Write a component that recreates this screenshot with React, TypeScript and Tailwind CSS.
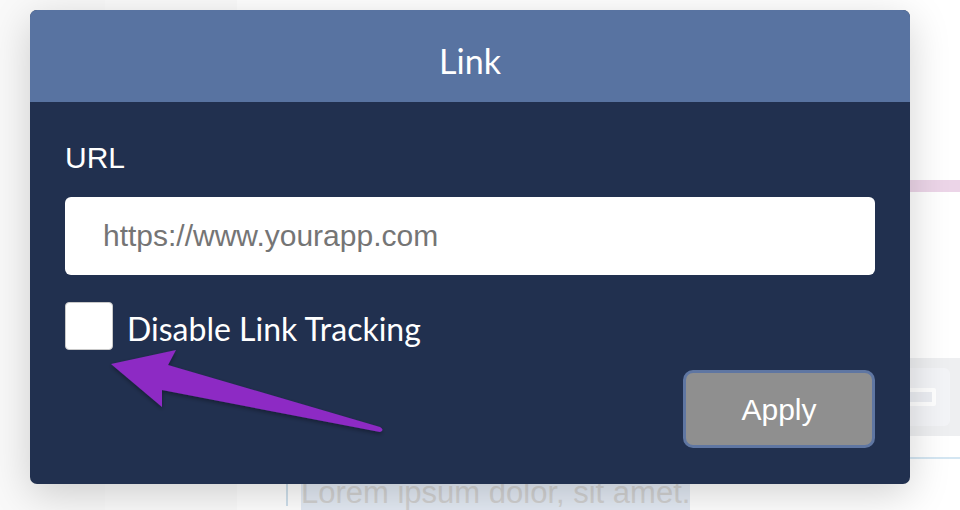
import React from "react";

export default function App() {
  return (
    <div className="relative w-[960px] h-[510px] overflow-hidden bg-white">
      {/* Background page */}
      <div className="flex w-full h-full">
        <div className="w-[105px] h-full bg-[#f9f9f9]" />
        <div className="w-[132px] h-full bg-[#fbfbfb]" />
        <div className="flex-1 flex flex-col">
          <div className="h-[183px]" />
          <div className="h-[12px] bg-[#ecd5e8]" />
          <div className="h-[169px]" />
          <div className="h-[79px] bg-[#eeeff1] p-[10px]">
            <div className="h-full rounded-md bg-[#f3f4f7] flex items-center justify-end pr-[14px]">
              <div className="w-[34px] h-[18px] border-[4px] border-white bg-[#eceef3] rounded-[2px]" />
            </div>
          </div>
          <div className="h-[22px]" />
          <div className="h-[2px] bg-[#d4e6f2]" />
          <div className="h-[17px]" />
          <div className="flex pl-[49px]">
            <div className="w-[2px] h-[30px] bg-[#cfe0ec]" />
            <div className="ml-[13px] bg-[#e3eaf4] text-[#d2d2d2] text-[31px] leading-[34px] font-['Liberation_Sans',sans-serif]">
              Lorem ipsum dolor, sit amet.
            </div>
          </div>
        </div>
      </div>

      {/* Modal */}
      <div className="absolute left-[30px] top-[10px] w-[880px] h-[474px] rounded-[7px] overflow-hidden bg-[#21304f] shadow-[0_10px_40px_rgba(0,0,0,0.18)] flex flex-col">
        <div className="h-[92px] bg-[#5873a1] flex items-center justify-center">
          <span className="text-white text-[34px] font-['Lato',sans-serif] leading-none pt-[10px]">Link</span>
        </div>
        <div className="flex-1 flex flex-col px-[35px] pt-[38px]">
          <div className="text-white text-[30px] leading-[36px] font-['Liberation_Sans',sans-serif]">URL</div>
          <input
            className="mt-[21px] h-[78px] w-full rounded-[6px] bg-white pl-[38px] text-[30px] font-['Liberation_Sans',sans-serif] text-[#333] placeholder:text-[#757575] outline-none"
            placeholder="https://www.yourapp.com"
          />
          <div className="mt-[27px] flex items-center">
            <div className="w-[48px] h-[48px] rounded-[4px] bg-white border border-[#c9c9c9]" />
            <span className="ml-[14px] text-white text-[32px] leading-none font-['Lato',sans-serif] pt-[6px]">Disable Link Tracking</span>
          </div>
          <div className="mt-[20px] flex justify-end">
            <button className="w-[192px] h-[78px] rounded-[10px] bg-[#8f8f8f] border-[3px] border-[#5f76a2] text-white text-[30px] font-['Liberation_Sans',sans-serif]">
              Apply
            </button>
          </div>
        </div>
      </div>

      {/* Annotation arrow */}
      <svg className="absolute inset-0 pointer-events-none" width="960" height="510" viewBox="0 0 960 510">
        <defs>
          <filter id="sh" x="-10%" y="-10%" width="120%" height="130%">
            <feDropShadow dx="0" dy="2" stdDeviation="2" floodColor="#000" floodOpacity="0.35" />
          </filter>
        </defs>
        <path
          d="M111,364 L176,350 L168,365 L380,427 Q385,430 380,432 L162,390 L162,407 Z"
          fill="#8d2bc4"
          filter="url(#sh)"
        />
      </svg>
    </div>
  );
}
